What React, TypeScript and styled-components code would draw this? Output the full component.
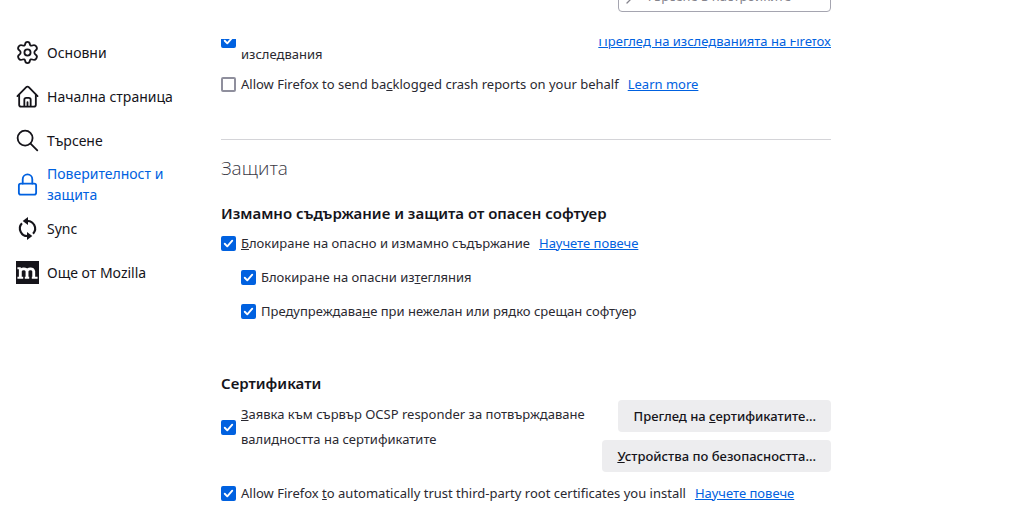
import React, { ReactNode } from "react";
import styled, { createGlobalStyle, css } from "styled-components";

const GlobalStyle = createGlobalStyle`
  *, *::before, *::after { box-sizing: border-box; }
  body {
    margin: 0;
    background: #fff;
    color: #2a2931;
    font: 13px/25px "Noto Sans", "Open Sans", sans-serif;
  }
`;

const Page = styled.div`
  display: flex;
  height: 100vh;
  overflow: hidden;
`;

const Sidebar = styled.nav`
  flex: 0 0 221px;
  padding: 30px 34px 0 16px;
`;

const NavList = styled.ul`
  margin: 0;
  padding: 0;
  list-style: none;
`;

const NavLink = styled.a<{ $active?: boolean }>`
  display: flex;
  align-items: center;
  gap: 8px;
  height: 44px;
  color: ${(p) => (p.$active ? "#0061e0" : "#15141a")};
  font-size: 14px;
  line-height: 21px;
  text-decoration: none;

  svg {
    flex: none;
  }
`;

const Main = styled.main`
  display: flex;
  flex-direction: column;
  flex: 0 1 610px;
  min-width: 0;
`;

const TopBar = styled.header`
  display: flex;
  flex: none;
  align-items: flex-end;
  justify-content: flex-end;
  height: 39px;
  padding-bottom: 27px;
  overflow: hidden;
`;

const SearchBox = styled.label`
  display: flex;
  flex: none;
  align-items: center;
  gap: 4px;
  width: 213px;
  height: 32px;
  padding: 0 7px;
  border: 1px solid #a5a5b0;
  border-radius: 4px;
  color: #85848d;
`;

const SearchInput = styled.input`
  flex: 1;
  min-width: 0;
  padding: 0;
  border: 0;
  outline: 0;
  background: none;
  font: inherit;

  &::placeholder {
    color: #85848d;
    opacity: 1;
  }
`;

const Pane = styled.div`
  flex: 1;
  min-height: 0;
  overflow: hidden;
`;

const Content = styled.div`
  margin-top: -24px;
`;

const Row = styled.div<{ $indent?: boolean; $gap?: number }>`
  display: flex;
  align-items: center;
  gap: 9px;
  min-height: 26px;
  margin-top: ${(p) => p.$gap ?? 8}px;
  padding-left: ${(p) => (p.$indent ? 20 : 0)}px;
`;

const SplitRow = styled.div`
  display: flex;
  align-items: flex-start;
  justify-content: space-between;
  gap: 12px;
`;

const CheckLabel = styled.label<{ $continued?: boolean; $tall?: boolean }>`
  display: flex;
  align-items: center;
  gap: 4px;
  min-height: ${(p) => (p.$tall ? 53 : 0)}px;

  ${(p) =>
    p.$continued &&
    css`
      height: 52px;
      padding-bottom: 2px;

      > span:last-child {
        padding-top: 29px;
      }
    `}
`;

const Box = styled.span`
  display: grid;
  flex: none;
  align-items: end;
  width: 16px;
  height: 16px;

  > * {
    grid-area: 1 / 1;
  }

  svg {
    display: none;
    pointer-events: none;
  }

  input:checked + svg {
    display: block;
  }
`;

const BoxInput = styled.input`
  appearance: none;
  width: 15px;
  height: 15px;
  margin: 0;
  border: 2px solid #8f8f9d;
  border-radius: 2px;
  background: #fff;

  &:checked {
    border-color: #0061e0;
    background: #0061e0;
  }
`;

const Link = styled.a`
  color: #0061e0;
  text-decoration: underline;
  white-space: nowrap;
`;

const Divider = styled.hr`
  height: 1px;
  margin: 42px 0 13px;
  border: 0;
  background: #d4d4d8;
`;

const Title = styled.h1`
  margin: 0;
  color: #3a3944;
  font-family: "Open Sans", "Noto Sans", sans-serif;
  font-size: 19px;
  font-weight: 300;
  line-height: 30px;
`;

const Heading = styled.h2<{ $gap: number }>`
  margin: ${(p) => p.$gap}px 0 4px;
  color: #15141a;
  font-size: 15px;
  font-weight: 600;
  line-height: 26px;
`;

const Buttons = styled.div`
  display: flex;
  flex: none;
  flex-direction: column;
  align-items: flex-end;
  gap: 8px;
`;

const Button = styled.button`
  height: 32px;
  padding: 0 15px;
  border: 0;
  border-radius: 4px;
  background: #ededef;
  color: #15141a;
  font: inherit;
  font-weight: 500;
`;

interface CheckProps {
  on?: boolean;
  continued?: boolean;
  tall?: boolean;
  children: ReactNode;
}

function Check({ on, continued, tall, children }: CheckProps) {
  return (
    <CheckLabel $continued={continued} $tall={tall}>
      <Box>
        <BoxInput type="checkbox" defaultChecked={on} />
        <svg width="15" height="15" viewBox="0 0 16 16" fill="none" stroke="#fff" strokeWidth="2" strokeLinecap="round" strokeLinejoin="round">
          <path d="M4 8.300 6.700 11 12 5" />
        </svg>
      </Box>
      <span>{children}</span>
    </CheckLabel>
  );
}

const line = {
  width: 23,
  height: 23,
  viewBox: "0 0 24 24",
  fill: "none",
  stroke: "currentColor",
  strokeWidth: 1.9,
  strokeLinecap: "round" as const,
  strokeLinejoin: "round" as const,
  "aria-hidden": true,
};

const GearIcon = () => (
  <svg {...line}>
    <path d="M9.500 3.500C9.700 1.900 10.500 1 12 1s2.300.9 2.500 2.500c.2 1.300 1.300 1.700 2.500 1.200 1.500-.6 3.100-.7 4.200 1.100s.5 3.300-.9 4.200c-1.500 1-1.500 3 0 4 1.400.9 2 2.400.9 4.200s-2.700 1.700-4.200 1.100c-1.200-.5-2.300-.1-2.500 1.200-.2 1.600-1 2.500-2.500 2.500s-2.300-.9-2.500-2.500c-.2-1.300-1.300-1.700-2.500-1.200-1.500.6-3.100.7-4.200-1.100s-.5-3.300.9-4.200c1.500-1 1.500-3 0-4-1.400-.9-2-2.400-.9-4.200s2.700-1.700 4.200-1.100c1.200.5 2.300.1 2.500-1.200z" />
    <circle cx="12" cy="12" r="3.200" />
  </svg>
);

const HomeIcon = () => (
  <svg {...line}>
    <path d="M1.500 11.500 10.700 2.300a1.800 1.800 0 0 1 2.600 0l9.200 9.200" />
    <path d="M3.300 10v10.500a2 2 0 0 0 2 2h13.400a2 2 0 0 0 2-2V10" />
    <path d="M8.700 22v-6.500a2 2 0 0 1 2-2h2.600a2 2 0 0 1 2 2V22M12 18v4" />
  </svg>
);

const SearchIcon = () => (
  <svg {...line}>
    <circle cx="9.500" cy="9.500" r="7.800" />
    <path d="m15.200 15.200 7 7" />
  </svg>
);

const LockIcon = () => (
  <svg {...line}>
    <rect x="3" y="11" width="18" height="11.500" rx="2" />
    <path d="M7 11V6.500a5 5 0 0 1 10 0V11" />
  </svg>
);

const SyncIcon = () => (
  <svg {...line} strokeWidth={2.2} strokeLinecap="butt">
    <path d="M11 4.200A7.900 7.900 0 0 1 17.800 17.400" />
    <path d="M13 19.800A7.900 7.900 0 0 1 6.200 6.600" />
    <path d="M12.500 0v8.400L7 4.200z" fill="currentColor" stroke="none" />
    <path d="M11.500 24v-8.400L17 19.800z" fill="currentColor" stroke="none" />
  </svg>
);

const MozillaIcon = () => (
  <svg width="23" height="23" viewBox="0 0 24 24" aria-hidden="true">
    <path fill="#15141a" d="M0 0h24v24H0z" />
    <g fill="none" stroke="#fff" strokeWidth="3">
      <path d="M4.500 17.500V7.500M4.500 10.500c.8-2.600 6-3.600 7 .2v6.800M11.500 10.500c.8-2.600 6-3.600 7 .2v6.800" />
      <path strokeWidth="2" d="M1.500 7.500H5M1.500 17.500h6M9.200 17.500h4.600M16.500 17.500h6" />
    </g>
  </svg>
);

const navItems = [
  { label: "Основни", icon: <GearIcon /> },
  { label: "Начална страница", icon: <HomeIcon /> },
  { label: "Търсене", icon: <SearchIcon /> },
  { label: "Поверителност и защита", icon: <LockIcon />, active: true },
  { label: "Sync", icon: <SyncIcon /> },
  { label: "Още от Mozilla", icon: <MozillaIcon /> },
];

export default function App() {
  return (
    <Page>
      <GlobalStyle />
      <Sidebar>
        <NavList>
          {navItems.map((item) => (
            <li key={item.label}>
              <NavLink href="#" $active={item.active} aria-current={item.active ? "page" : undefined}>
                {item.icon}
                <span>{item.label}</span>
              </NavLink>
            </li>
          ))}
        </NavList>
      </Sidebar>
      <Main>
        <TopBar>
          <SearchBox>
            <svg width="16" height="16" viewBox="0 0 16 16" fill="none" stroke="currentColor" strokeWidth="1.300" strokeLinecap="round" aria-hidden="true">
              <circle cx="10" cy="6" r="4.500" />
              <path d="M6.500 9.500 1 15" />
            </svg>
            <SearchInput type="search" placeholder="Търсене в настройките" />
          </SearchBox>
        </TopBar>
        <Pane>
          <Content>
            <SplitRow>
              <Check on continued>изследвания</Check>
              <Row $gap={13}>
                <Link href="#">Преглед на изследванията на Firefox</Link>
              </Row>
            </SplitRow>
            <Row $gap={4}>
              <Check>
                Allow Firefox to send ba<u>c</u>klogged crash reports on your behalf
              </Check>
              <Link href="#">Learn more</Link>
            </Row>
            <Divider />
            <Title>Защита</Title>
            <Heading $gap={17}>Измамно съдържание и защита от опасен софтуер</Heading>
            <Row $gap={0}>
              <Check on>
                <u>Б</u>локиране на опасно и измамно съдържание
              </Check>
              <Link href="#">Научете повече</Link>
            </Row>
            <Row $indent>
              <Check on>
                Блокиране на опасни из<u>т</u>егляния
              </Check>
            </Row>
            <Row $indent>
              <Check on>
                Предупреждава<u>н</u>е при нежелан или рядко срещан софтуер
              </Check>
            </Row>
            <Heading $gap={46}>Сертификати</Heading>
            <SplitRow>
              <Check on tall>
                <u>З</u>аявка към сървър OCSP responder за потвърждаване валидността на сертификатите
              </Check>
              <Buttons>
                <Button type="button">
                  Преглед на <u>с</u>ертификатите...
                </Button>
                <Button type="button">
                  <u>У</u>стройства по безопасността...
                </Button>
              </Buttons>
            </SplitRow>
            <Row>
              <Check on>
                Allow Firefox <u>t</u>o automatically trust third-party root certificates you install
              </Check>
              <Link href="#">Научете повече</Link>
            </Row>
          </Content>
        </Pane>
      </Main>
    </Page>
  );
}
